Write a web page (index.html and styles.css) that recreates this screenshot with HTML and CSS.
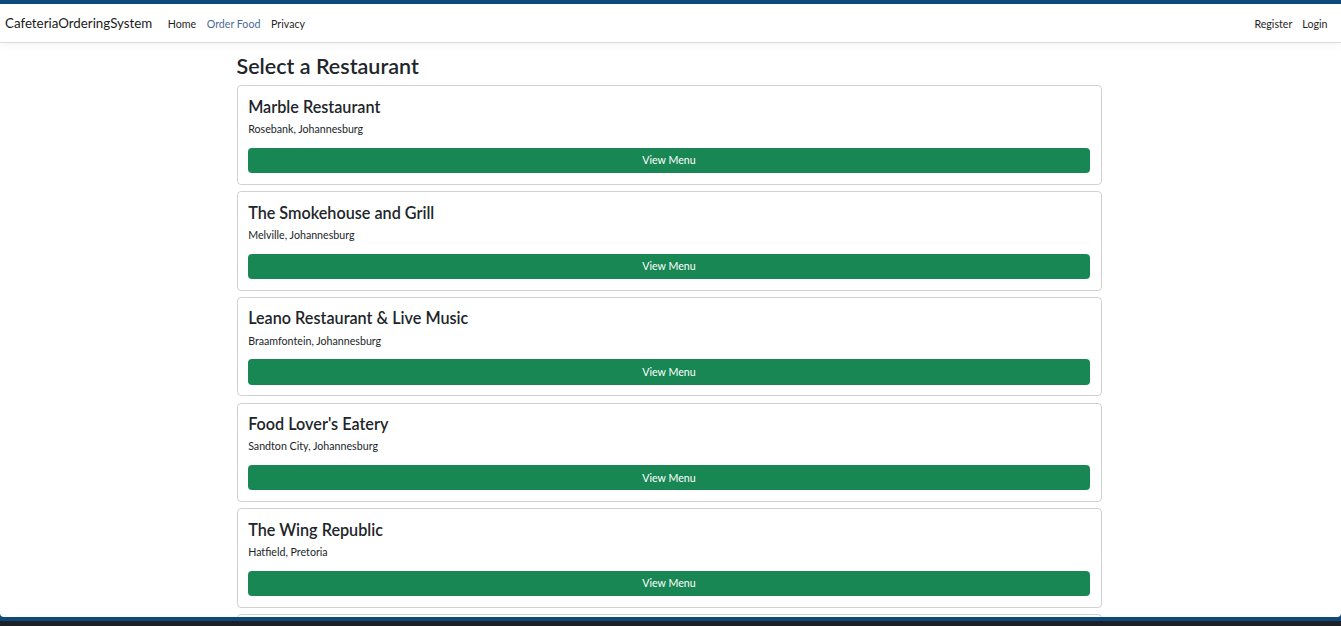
FILE: index.html
```html
<!DOCTYPE html>
<html lang="en">
<head>
<meta charset="utf-8">
<title>Select a Restaurant - CafeteriaOrderingSystem</title>
<link rel="stylesheet" href="styles.css">
</head>
<body>
<div class="window">
  <div class="app">
    <header class="navbar">
      <a class="brand" href="#">CafeteriaOrderingSystem</a>
      <nav class="nav-left">
        <a class="nav-link" href="#">Home</a>
        <a class="nav-link active" href="#">Order Food</a>
        <a class="nav-link" href="#">Privacy</a>
      </nav>
      <nav class="nav-right">
        <a class="nav-link" href="#">Register</a>
        <a class="nav-link" href="#">Login</a>
      </nav>
    </header>
    <main class="container">
      <h2 class="page-title">Select a Restaurant</h2>
      <div class="card">
        <h4 class="card-title">Marble Restaurant</h4>
        <p class="card-text">Rosebank, Johannesburg</p>
        <a class="btn" href="#">View Menu</a>
      </div>
      <div class="card">
        <h4 class="card-title">The Smokehouse and Grill</h4>
        <p class="card-text">Melville, Johannesburg</p>
        <a class="btn" href="#">View Menu</a>
      </div>
      <div class="card">
        <h4 class="card-title">Leano Restaurant &amp; Live Music</h4>
        <p class="card-text">Braamfontein, Johannesburg</p>
        <a class="btn" href="#">View Menu</a>
      </div>
      <div class="card">
        <h4 class="card-title">Food Lover's Eatery</h4>
        <p class="card-text">Sandton City, Johannesburg</p>
        <a class="btn" href="#">View Menu</a>
      </div>
      <div class="card">
        <h4 class="card-title">The Wing Republic</h4>
        <p class="card-text">Hatfield, Pretoria</p>
        <a class="btn" href="#">View Menu</a>
      </div>
      <div class="card card-peek"></div>
    </main>
  </div>
</div>
</body>
</html>
```

FILE: styles.css
```css
html, body {
  margin: 0;
  padding: 0;
}
body {
  height: 626px;
  overflow: hidden;
  background: #1d2126;
  font-family: "Segoe UI", Lato, "Noto Sans", "Liberation Sans", sans-serif;
  color: #212529;
}
.window {
  height: 613px;
  padding: 4px 0 4px 0;
  background: #0d4a7a;
}
.app {
  height: 613px;
  background: #ffffff;
  overflow: hidden;
  border-radius: 0 0 4px 4px;
}
a {
  text-decoration: none;
}
.navbar {
  height: 38px;
  display: flex;
  align-items: center;
  padding: 0 9px 0 5px;
  border-bottom: 1px solid #dcdcdc;
  box-shadow: 0 2px 8px rgba(0, 0, 0, 0.05);
  background: #fff;
  position: relative;
}
.brand {
  font-size: 13.33px;
  color: #1a1a1a;
  margin-right: 10px;
}
.nav-left {
  display: flex;
  flex: 1;
}
.nav-right {
  display: flex;
}
.nav-link {
  font-size: 10.67px;
  color: #1f1f1f;
  padding: 0 5.33px;
}
.nav-right .nav-link {
  padding: 0 4.5px 0 5.5px;
}
.nav-link.active {
  color: #4a6b96;
}
.container {
  width: 865px;
  margin: 0 0 0 236.5px;
  padding-top: 11px;
}
.page-title {
  font-size: 21.5px;
  font-weight: 600;
  line-height: 1.2;
  margin: 0 0 5.5px 0;
}
.card {
  border: 1px solid rgba(0, 0, 0, 0.175);
  border-radius: 4px;
  padding: 10.67px;
  margin-bottom: 6.25px;
  display: flex;
  flex-direction: column;
}
.card-peek {
  height: 60px;
}
.card-title {
  font-size: 16.2px;
  font-weight: 600;
  line-height: 19.2px;
  margin: 0 0 5px 0;
}
.card-text {
  font-size: 10.67px;
  line-height: 16px;
  margin: 0 0 10.67px 0;
}
.btn {
  display: block;
  background: #198754;
  color: #fff;
  font-size: 10.67px;
  line-height: 16px;
  padding: 4.67px 8px;
  text-align: center;
  border-radius: 4px;
}
```
